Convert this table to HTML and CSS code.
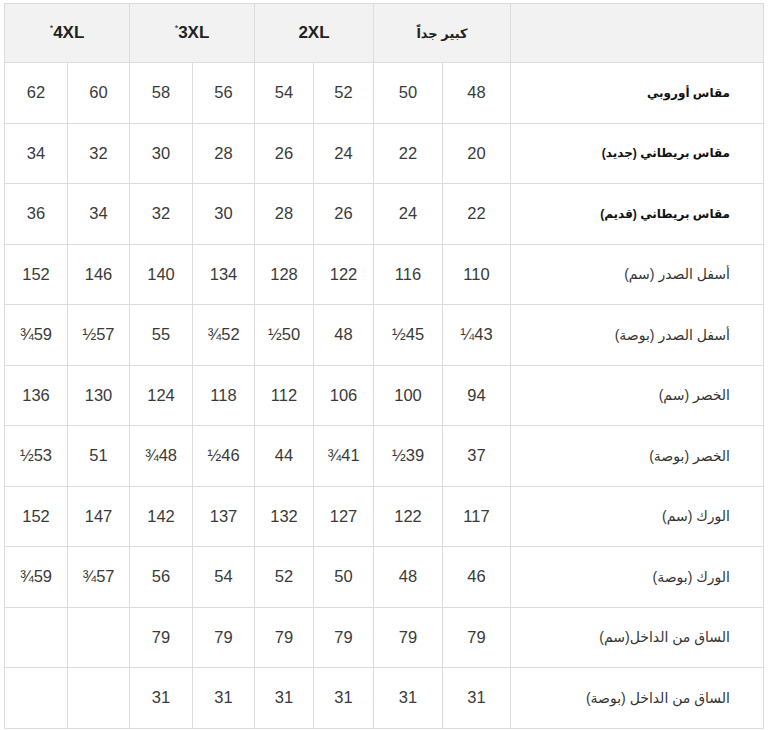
FILE: index.html
```html
<!DOCTYPE html>
<html lang="ar" dir="rtl">
<head>
<meta charset="utf-8">
<link rel="stylesheet" href="styles.css">
</head>
<body>
<table class="size-table">
  <colgroup>
    <col class="c-label">
    <col class="c-68"><col class="c-69">
    <col class="c-60"><col class="c-59">
    <col class="c-62"><col class="c-63">
    <col class="c-62"><col class="c-63">
  </colgroup>
  <thead>
    <tr>
      <th></th>
      <th colspan="2" class="ar">كبير جداً</th>
      <th colspan="2">2XL</th>
      <th colspan="2">3XL<sup>*</sup></th>
      <th colspan="2">4XL<sup>*</sup></th>
    </tr>
  </thead>
  <tbody>
    <tr><td class="label strong">مقاس أوروبي</td><td>48</td><td>50</td><td>52</td><td>54</td><td>56</td><td>58</td><td>60</td><td>62</td></tr>
    <tr><td class="label strong">مقاس بريطاني (جديد)</td><td>20</td><td>22</td><td>24</td><td>26</td><td>28</td><td>30</td><td>32</td><td>34</td></tr>
    <tr><td class="label strong">مقاس بريطاني (قديم)</td><td>22</td><td>24</td><td>26</td><td>28</td><td>30</td><td>32</td><td>34</td><td>36</td></tr>
    <tr><td class="label">أسفل الصدر (سم)</td><td>110</td><td>116</td><td>122</td><td>128</td><td>134</td><td>140</td><td>146</td><td>152</td></tr>
    <tr><td class="label">أسفل الصدر (بوصة)</td><td>43¼</td><td>45½</td><td>48</td><td>50½</td><td>52¾</td><td>55</td><td>57½</td><td>59¾</td></tr>
    <tr><td class="label">الخصر (سم)</td><td>94</td><td>100</td><td>106</td><td>112</td><td>118</td><td>124</td><td>130</td><td>136</td></tr>
    <tr><td class="label">الخصر (بوصة)</td><td>37</td><td>39½</td><td>41¾</td><td>44</td><td>46½</td><td>48¾</td><td>51</td><td>53½</td></tr>
    <tr><td class="label">الورك (سم)</td><td>117</td><td>122</td><td>127</td><td>132</td><td>137</td><td>142</td><td>147</td><td>152</td></tr>
    <tr><td class="label">الورك (بوصة)</td><td>46</td><td>48</td><td>50</td><td>52</td><td>54</td><td>56</td><td>57¾</td><td>59¾</td></tr>
    <tr><td class="label">الساق من الداخل(سم)</td><td>79</td><td>79</td><td>79</td><td>79</td><td>79</td><td>79</td><td></td><td></td></tr>
    <tr><td class="label">الساق من الداخل (بوصة)</td><td>31</td><td>31</td><td>31</td><td>31</td><td>31</td><td>31</td><td></td><td></td></tr>
  </tbody>
</table>
</body>
</html>
```

FILE: styles.css
```css
html, body {
  margin: 0;
  padding: 0;
  background: #ffffff;
}

body {
  padding: 3px 4px 0 5px;
  font-family: "Liberation Sans", "DejaVu Sans", Arial, sans-serif;
  color: #333333;
}

.size-table {
  width: 760px;
  border-collapse: collapse;
  table-layout: fixed;
  direction: rtl;
}

.c-label { width: 253px; }
.c-68 { width: 68px; }
.c-69 { width: 69px; }
.c-60 { width: 60px; }
.c-59 { width: 59px; }
.c-62 { width: 62px; }
.c-63 { width: 63px; }

.size-table th,
.size-table td {
  border: 1px solid #dcdcdc;
  text-align: center;
  vertical-align: middle;
  padding: 0;
  font-size: 16.5px;
}

.size-table th {
  height: 58px;
  background: #f2f2f2;
  font-weight: bold;
  font-size: 17px;
  color: #222222;
}

.size-table th.ar {
  font-size: 13px;
}

.size-table td {
  height: 59.5px;
  color: #3a3a3a;
}

.size-table sup {
  font-size: 9px;
  font-weight: normal;
  vertical-align: 7px;
  line-height: 0;
}

.size-table td.label {
  text-align: right;
  padding-right: 33px;
  font-size: 14px;
  color: #333333;
}

.size-table td.label.strong {
  font-weight: bold;
  font-size: 12px;
  color: #111111;
}
```
